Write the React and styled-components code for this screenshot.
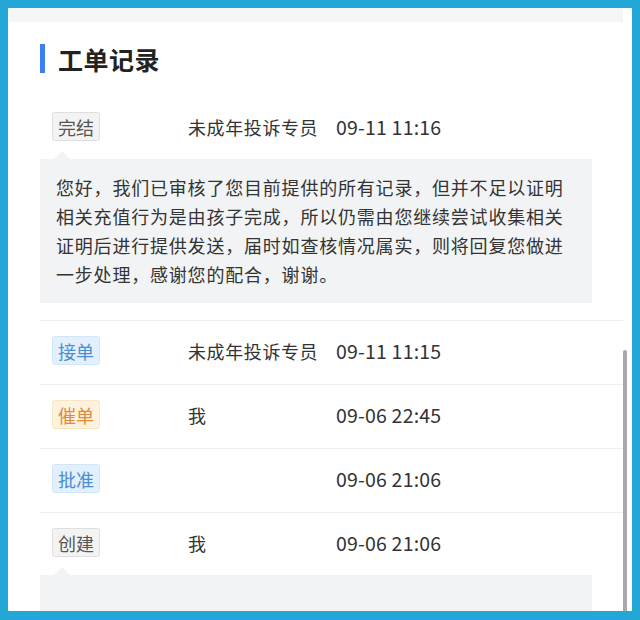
import React from "react";
import styled, { createGlobalStyle } from "styled-components";

const GlobalStyle = createGlobalStyle`
  html, body {
    margin: 0;
    padding: 0;
    background: #22a7d6;
  }
  body {
    font-family: "Noto Sans CJK SC", "Noto Sans", sans-serif;
  }
`;

const Frame = styled.div`
  width: 640px;
  height: 620px;
  box-sizing: border-box;
  padding: 8px 8px 9px 8px;
  background: #22a7d6;
`;

const Page = styled.div`
  position: relative;
  height: 100%;
  background: #fff;
  overflow: hidden;
`;

const TopStrip = styled.div`
  height: 14px;
  margin-right: 9px;
  background: #f4f5f7;
`;

const Section = styled.section`
  padding: 22px 9px 0 32px;
`;

const Title = styled.h2`
  display: flex;
  align-items: center;
  gap: 13px;
  margin: 0 0 24px;
  height: 29px;
  font-size: 25px;
  font-weight: 700;
  color: #222;
  letter-spacing: 0.5px;

  &::before {
    content: "";
    width: 5px;
    height: 29px;
    background: #3b7ff0;
  }
`;

const Record = styled.div`
  padding: 15px 0 ${(p) => (p.$withNote ? "17px" : "19px")};
  border-bottom: ${(p) => (p.$last ? "none" : "1px solid #eeeeee")};
`;

const Row = styled.div`
  display: grid;
  grid-template-columns: 148px 148px auto;
  align-items: center;
  height: 29px;
  font-size: 18px;
  color: #333;
`;

const tagColors = {
  gray: { bg: "#f3f3f3", border: "#dedede", text: "#555" },
  blue: { bg: "#e2f0fd", border: "#d3e6f8", text: "#4b8dcf" },
  orange: { bg: "#fdf2dd", border: "#f7e5c4", text: "#e2883a" },
};

const Tag = styled.span`
  justify-self: start;
  margin-left: 12px;
  height: 29px;
  box-sizing: border-box;
  padding: 0 5px;
  display: inline-flex;
  align-items: center;
  font-size: 18px;
  border-radius: 3px;
  background: ${(p) => tagColors[p.$tone].bg};
  border: 1px solid ${(p) => tagColors[p.$tone].border};
  color: ${(p) => tagColors[p.$tone].text};
`;

const Name = styled.span`
  letter-spacing: 0.6px;
  white-space: nowrap;
`;

const Time = styled.span`
  font-size: 19.5px;
  letter-spacing: 0.2px;
  white-space: nowrap;
`;

const Bubble = styled.div`
  position: relative;
  margin: 18px 31px 0 0;
  min-height: ${(p) => (p.$empty ? "60px" : "auto")};
  padding: 14px 16px;
  background: #f2f3f5;
  font-size: 18px;
  line-height: 29px;
  letter-spacing: 0.8px;
  color: #333;

  &::before {
    content: "";
    position: absolute;
    left: 14px;
    top: -8px;
    border-left: 8px solid transparent;
    border-right: 8px solid transparent;
    border-bottom: 8px solid #f2f3f5;
  }
`;

const Scrollbar = styled.div`
  position: absolute;
  right: 5px;
  top: 342px;
  bottom: 0;
  width: 4px;
  border-radius: 2px 2px 0 0;
  background: #a9a9a9;
`;

const records = [
  {
    tag: "完结",
    tone: "gray",
    name: "未成年投诉专员",
    time: "09-11 11:16",
    note:
      "您好，我们已审核了您目前提供的所有记录，但并不足以证明相关充值行为是由孩子完成，所以仍需由您继续尝试收集相关证明后进行提供发送，届时如查核情况属实，则将回复您做进一步处理，感谢您的配合，谢谢。",
  },
  { tag: "接单", tone: "blue", name: "未成年投诉专员", time: "09-11 11:15" },
  { tag: "催单", tone: "orange", name: "我", time: "09-06 22:45" },
  { tag: "批准", tone: "blue", name: "", time: "09-06 21:06" },
  { tag: "创建", tone: "gray", name: "我", time: "09-06 21:06", note: "" },
];

export default function App() {
  return (
    <>
      <GlobalStyle />
      <Frame>
        <Page>
          <TopStrip />
          <Section>
            <Title>工单记录</Title>
            {records.map((r, i) => (
              <Record
                key={i}
                $last={i === records.length - 1}
                $withNote={r.note !== undefined}
              >
                <Row>
                  <Tag $tone={r.tone}>{r.tag}</Tag>
                  <Name>{r.name}</Name>
                  <Time>{r.time}</Time>
                </Row>
                {r.note !== undefined && (
                  <Bubble $empty={!r.note}>{r.note}</Bubble>
                )}
              </Record>
            ))}
          </Section>
          <Scrollbar />
        </Page>
      </Frame>
    </>
  );
}
